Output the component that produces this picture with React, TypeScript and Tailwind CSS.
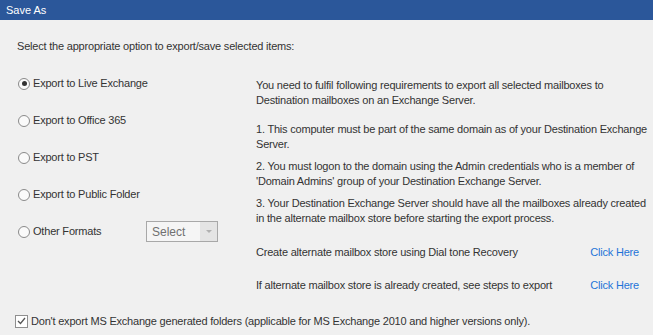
import React from "react";

const Radio = ({ checked }: { checked?: boolean }) => (
  <span className="w-[12px] h-[12px] rounded-full border border-[#8a8a8a] bg-[#fafafa] flex items-center justify-center shrink-0">
    {checked && <span className="w-[5px] h-[5px] rounded-full bg-[#333333]" />}
  </span>
);

const RadioRow = ({ label, checked, children }: { label: string; checked?: boolean; children?: React.ReactNode }) => (
  <div className="h-[37px] flex items-center">
    <div className="flex items-center w-[128px]">
      <Radio checked={checked} />
      <span className="ml-[3px] whitespace-nowrap">{label}</span>
    </div>
    {children}
  </div>
);

export default function App() {
  return (
    <div
      className="w-[653px] h-[335px] bg-[#f0f0f0] text-[#333333] text-[11px] tracking-[-0.2px] overflow-hidden"
      style={{ fontFamily: '"Liberation Sans", Arial, sans-serif' }}
    >
      <div className="h-[20px] bg-[#2b579a] text-white text-[11px] tracking-normal flex items-center pl-[6px]">Save As</div>
      <div className="pt-[19px] pl-[17px] leading-[14px] whitespace-nowrap">
        Select the appropriate option to export/save selected items:
      </div>
      <div className="flex mt-[12px]">
        <div className="w-[256px] pl-[18px] flex flex-col">
          <RadioRow label="Export to Live Exchange" checked />
          <RadioRow label="Export to Office 365" />
          <RadioRow label="Export to PST" />
          <RadioRow label="Export to Public Folder" />
          <RadioRow label="Other Formats">
            <div className="w-[72px] h-[21px] border border-[#a8a8a8] bg-[#f5f5f5] flex items-stretch">
              <span className="flex-1 flex items-center pl-[5px] text-[12px] tracking-normal text-[#707070]">Select</span>
              <span className="w-[17px] bg-[#e4e4e4] flex items-center justify-center">
                <svg width="6" height="4" viewBox="0 0 6 4">
                  <path d="M0 0 L6 0 L3 3 Z" fill="#b0b0b0" />
                </svg>
              </span>
            </div>
          </RadioRow>
        </div>
        <div className="w-[383px] pt-[13px] leading-[15px] whitespace-nowrap">
          <div className="mb-[14px]">
            You need to fulfil following requirements to export all selected mailboxes to
            <br />
            Destination mailboxes on an Exchange Server.
          </div>
          <div className="mb-[7px]">
            1. This computer must be part of the same domain as of your Destination Exchange
            <br />
            Server.
          </div>
          <div className="mb-[7px]">
            2. You must logon to the domain using the Admin credentials who is a member of
            <br />
            'Domain Admins' group of your Destination Exchange Server.
          </div>
          <div>
            3. Your Destination Exchange Server should have all the mailboxes already created
            <br />
            in the alternate mailbox store before starting the export process.
          </div>
          <div className="mt-[19px] flex justify-between">
            <span>Create alternate mailbox store using Dial tone Recovery</span>
            <span className="text-[#1f74d8] cursor-pointer">Click Here</span>
          </div>
          <div className="mt-[18px] flex justify-between">
            <span>If alternate mailbox store is already created, see steps to export</span>
            <span className="text-[#1f74d8] cursor-pointer">Click Here</span>
          </div>
        </div>
      </div>
      <div className="mt-[21px] pl-[15px] flex items-center h-[14px]">
        <span className="w-[13px] h-[13px] border border-[#8f8f8f] bg-white flex items-center justify-center shrink-0">
          <svg width="9" height="8" viewBox="0 0 9 8">
            <path d="M1 4 L3.5 6.5 L8 1" stroke="#555555" strokeWidth="1.3" fill="none" />
          </svg>
        </span>
        <span className="ml-[3px] whitespace-nowrap">
          Don't export MS Exchange generated folders (applicable for MS Exchange 2010 and higher versions only).
        </span>
      </div>
    </div>
  );
}
